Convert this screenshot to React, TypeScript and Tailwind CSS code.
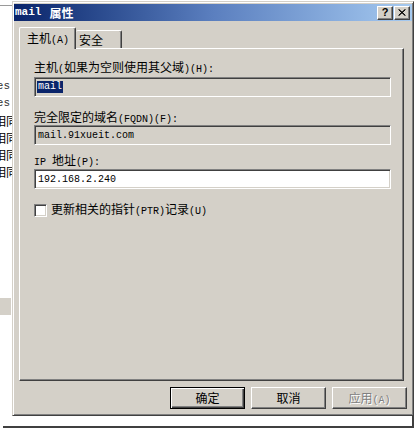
import React from "react";

const mono = "font-['Liberation_Mono',monospace] text-[10px]";

function Mix({ text, className = "" }: { text: string; className?: string }) {
  const parts = text.split(/([\x00-\x7F]+)/).filter((p) => p.length > 0);
  return (
    <span className={className}>
      {parts.map((p, i) =>
        /^[\x00-\x7F]+$/.test(p) ? (
          <span key={i} className={mono + " whitespace-pre"}>
            {p}
          </span>
        ) : (
          <span key={i}>{p}</span>
        )
      )}
    </span>
  );
}

function TitleBtn({ children }: { children: React.ReactNode }) {
  return (
    <div className="w-[16px] h-[14px] bg-[#d4d0c8] border border-t-white border-l-white border-b-[#404040] border-r-[#404040] shadow-[inset_-1px_-1px_#808080] flex items-center justify-center">
      {children}
    </div>
  );
}

function TextBox({ children, white }: { children: React.ReactNode; white?: boolean }) {
  return (
    <div
      className={
        "h-[20px] w-full border border-t-[#808080] border-l-[#808080] border-b-white border-r-white shadow-[inset_1px_1px_#404040,inset_-1px_-1px_#d4d0c8] flex items-center pl-[2px] " +
        (white ? "bg-white" : "bg-[#d4d0c8]")
      }
    >
      {children}
    </div>
  );
}

export default function App() {
  return (
    <div className="w-[418px] h-[430px] bg-white overflow-hidden flex flex-col font-['Noto_Sans_CJK_SC',sans-serif] text-[12px] text-black">
      <div className="flex h-[416px]">
        {/* left strip (window behind) */}
        <div className="w-[12px] shrink-0 overflow-hidden flex flex-col">
          <div className="mt-[5px] h-[1px] bg-[#9a9a9a]" />
          <div className="mt-[72px] flex flex-col items-end whitespace-nowrap">
            <div className="h-[17px] flex items-center pr-[2px]">
              <span className={mono + " text-[11px] text-[#333]"}>es</span>
            </div>
            <div className="h-[17px] flex items-center pr-[2px]">
              <span className={mono + " text-[11px] text-[#333]"}>es</span>
            </div>
            <div className="h-[17px] flex items-center -mr-[6px]">相同</div>
            <div className="h-[17px] flex items-center -mr-[6px]">相同</div>
            <div className="h-[17px] flex items-center -mr-[6px]">相同</div>
            <div className="h-[17px] flex items-center -mr-[6px]">相同</div>
          </div>
          <div className="mt-[118px] h-[17px] w-[11px] bg-[#d4d0c8]" />
        </div>

        {/* dialog */}
        <div className="mt-[1px] w-[402px] h-[415px] bg-[#d4d0c8] border border-t-[#d4d0c8] border-l-[#d4d0c8] border-b-[#404040] border-r-[#404040] shadow-[inset_1px_1px_#fff,inset_-1px_-1px_#808080] p-[1px] flex flex-col">
          {/* title bar */}
          <div className="mt-[1px] h-[17px] bg-gradient-to-r from-[#0a246a] via-[#5b7fbf] to-[#a6caf0] flex items-center justify-between pl-[1px] pr-[2px]">
            <div className="text-white font-bold flex items-center leading-[17px]">
              <span className="font-['Liberation_Mono',monospace] text-[11px] font-bold">mail</span>
              <span className="ml-[8px]">属性</span>
            </div>
            <div className="flex gap-[1px]">
              <TitleBtn>
                <span className="font-['Liberation_Sans',sans-serif] font-bold text-[11px] leading-none">?</span>
              </TitleBtn>
              <TitleBtn>
                <svg width="8" height="7" viewBox="0 0 8 7">
                  <path d="M0.5 0.5 L7 6.5 M1 0.5 L7.5 6.5 M7 0.5 L0.5 6.5 M7.5 0.5 L1 6.5" stroke="#000" strokeWidth="1" />
                </svg>
              </TitleBtn>
            </div>
          </div>

          {/* tabs */}
          <div className="mt-[6px] ml-[5px] flex items-end">
            <div className="relative z-10 -mb-[1px] h-[22px] w-[57px] bg-[#d4d0c8] border-t border-l border-r border-t-white border-l-white border-r-[#404040] rounded-t-[2px] shadow-[inset_-1px_0_#808080] flex items-center pl-[7px]">
              <Mix text="主机(A)" />
            </div>
            <div className="h-[18px] w-[46px] bg-[#d4d0c8] border-t border-r border-t-white border-r-[#404040] rounded-t-[2px] shadow-[inset_-1px_0_#808080] flex items-center pl-[3px]">
              <span>安全</span>
            </div>
          </div>

          {/* panel */}
          <div className="ml-[5px] w-[385px] h-[333px] border border-t-white border-l-white border-b-[#404040] border-r-[#404040] shadow-[inset_-1px_-1px_#808080] pl-[14px] pr-[12px] pt-[11px] flex flex-col">
            <div className="h-[14px] leading-[14px] whitespace-nowrap">
              <Mix text="主机(如果为空则使用其父域)(H):" />
            </div>
            <div className="mt-[3px]">
              <TextBox>
                <span className={mono + " bg-[#0a246a] text-white leading-[12px] px-[1px]"}>mail</span>
              </TextBox>
            </div>
            <div className="mt-[13px] h-[14px] leading-[14px] whitespace-nowrap">
              <Mix text="完全限定的域名(FQDN)(F):" />
            </div>
            <div className="mt-[1px]">
              <TextBox>
                <span className={mono + " pl-[1px]"}>mail.91xueit.com</span>
              </TextBox>
            </div>
            <div className="mt-[8px] h-[14px] leading-[14px] whitespace-nowrap">
              <Mix text="IP 地址(P):" />
            </div>
            <div className="mt-[2px]">
              <TextBox white>
                <span className={mono + " pl-[1px]"}>192.168.2.240</span>
              </TextBox>
            </div>
            <div className="mt-[13px] flex items-center gap-[4px]">
              <div className="w-[13px] h-[13px] bg-white border border-t-[#808080] border-l-[#808080] border-b-white border-r-white shadow-[inset_1px_1px_#404040,inset_-1px_-1px_#d4d0c8]" />
              <div className="leading-[14px] whitespace-nowrap">
                <Mix text="更新相关的指针(PTR)记录(U)" />
              </div>
            </div>
          </div>

          {/* buttons */}
          <div className="mt-[6px] flex justify-end gap-[6px] pr-[5px]">
            <div className="w-[75px] h-[22px] border border-black shadow-[inset_1px_1px_#fff,inset_-1px_-1px_#404040,inset_-2px_-2px_#808080] flex items-center justify-center">
              确定
            </div>
            <div className="w-[75px] h-[22px] border border-t-white border-l-white border-b-[#404040] border-r-[#404040] shadow-[inset_-1px_-1px_#808080] flex items-center justify-center">
              取消
            </div>
            <div className="w-[75px] h-[22px] border border-t-white border-l-white border-b-[#404040] border-r-[#404040] shadow-[inset_-1px_-1px_#808080] flex items-center justify-center text-[#808080] [text-shadow:1px_1px_#fff]">
              <Mix text="应用(A)" />
            </div>
          </div>
        </div>
      </div>
      <div className="ml-[3px] w-[411px] h-[12px] border-r-2 border-b-2 border-[#404040]" />
    </div>
  );
}
